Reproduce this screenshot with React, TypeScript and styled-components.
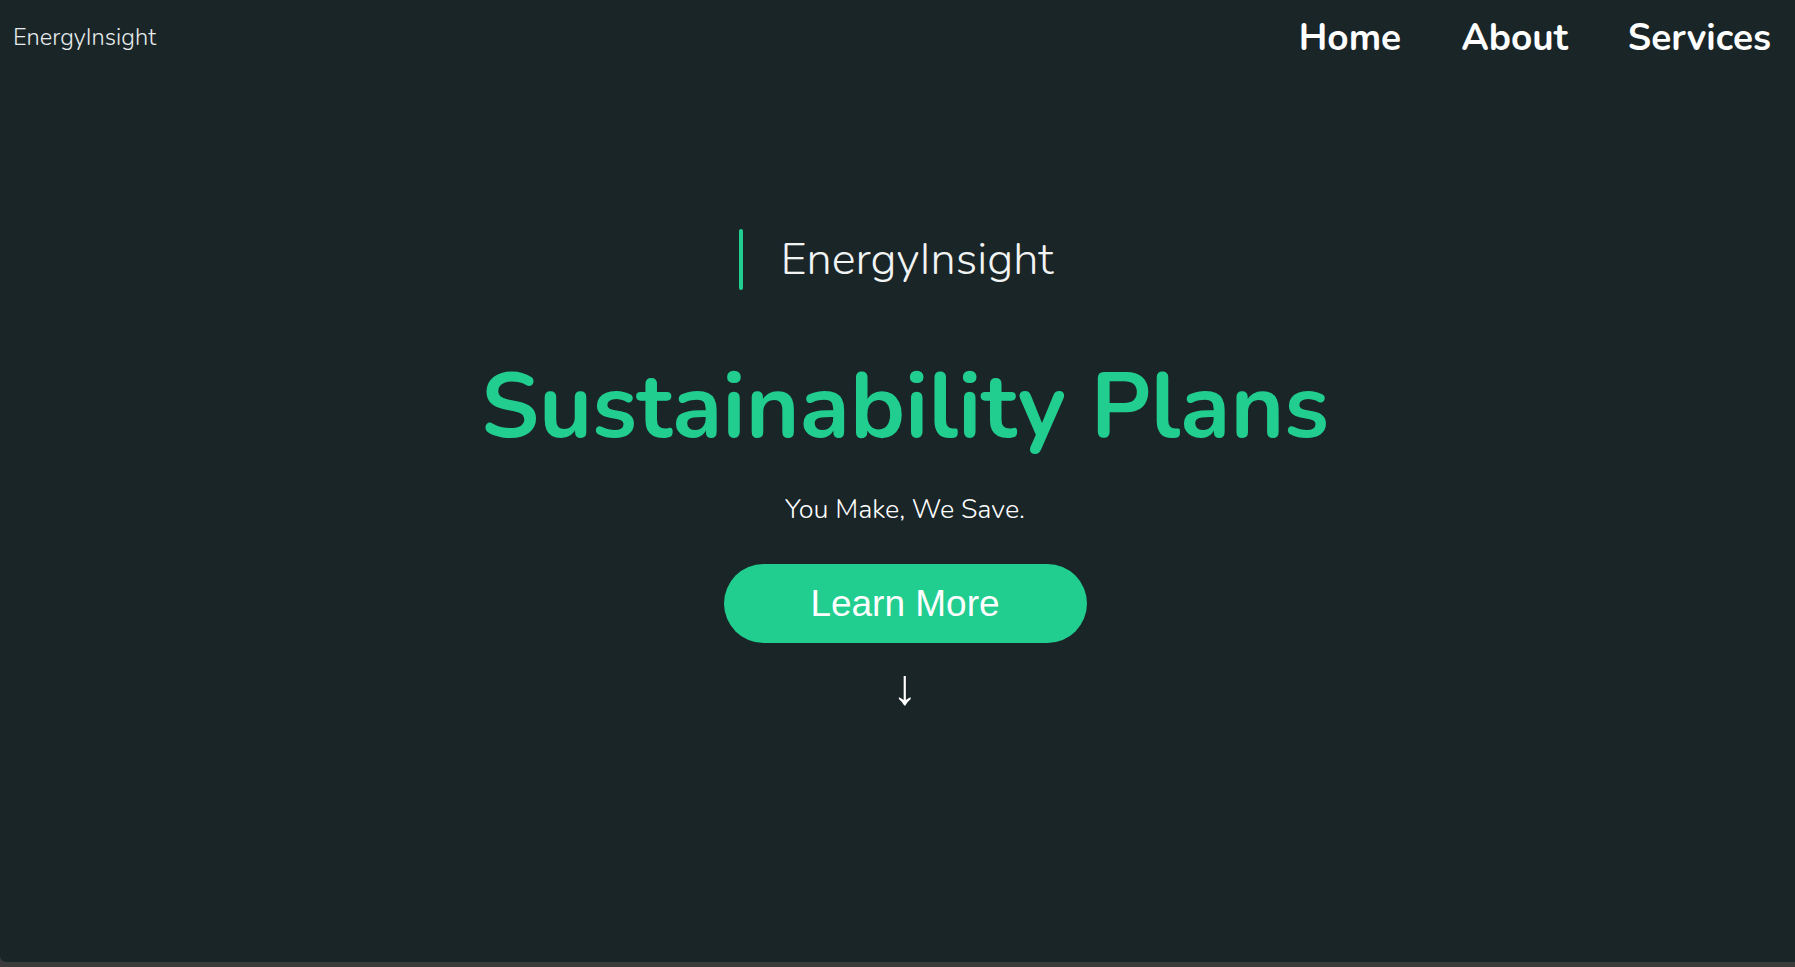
import React from "react";
import styled, { createGlobalStyle } from "styled-components";

const GlobalStyle = createGlobalStyle`
  html, body {
    margin: 0;
    padding: 0;
    background: #3b3b3b;
  }
  * { box-sizing: border-box; }
`;

const Page = styled.div`
  height: 962px;
  background: #1a2528;
  border-bottom-left-radius: 6px;
  display: flex;
  flex-direction: column;
  font-family: "Nunito", "Lato", sans-serif;
  color: #ffffff;
`;

const Header = styled.header`
  display: flex;
  align-items: center;
  justify-content: space-between;
  height: 75px;
  padding: 0 24px 0 13px;
`;

const Logo = styled.a`
  font-size: 23.6px;
  font-weight: 300;
  color: #e8ecec;
  text-decoration: none;
  margin-top: -1px;
`;

const Nav = styled.nav`
  display: flex;
  gap: 60px;
  align-items: center;
`;

const NavLink = styled.a`
  font-size: 37px;
  font-weight: 700;
  color: #ffffff;
  text-decoration: none;
`;

const Hero = styled.main`
  display: flex;
  flex-direction: column;
  align-items: center;
  padding: 154px 0 0 15px;
`;

const Brand = styled.div`
  display: flex;
  align-items: center;
  gap: 38px;
  height: 61px;
  margin-right: 18px;
`;

const BrandBar = styled.span`
  width: 4px;
  height: 61px;
  border-radius: 2px;
  background: #21cd8f;
`;

const BrandText = styled.span`
  font-size: 45px;
  font-weight: 300;
  color: #f2f4f4;
  line-height: 61px;
`;

const Headline = styled.h1`
  margin: 62px 0 0;
  font-size: 92px;
  font-weight: 700;
  line-height: 1.2;
  color: #21cd8f;
`;

const Tagline = styled.p`
  margin: 29px 0 0;
  font-size: 27px;
  font-weight: 300;
  color: #ffffff;
`;

const Button = styled.button`
  margin-top: 36px;
  width: 363px;
  height: 79px;
  border: none;
  border-radius: 40px;
  background: #21cd8f;
  color: #ffffff;
  font-family: "Liberation Sans", Arial, sans-serif;
  font-size: 37px;
  cursor: pointer;
`;

const Arrow = styled.div`
  margin-top: 19px;
  font-family: "Liberation Sans", Arial, sans-serif;
  font-size: 50px;
  line-height: 1;
  color: #ffffff;
`;

export default function App() {
  return (
    <>
      <GlobalStyle />
      <Page>
        <Header>
          <Logo href="#">EnergyInsight</Logo>
          <Nav>
            <NavLink href="#">Home</NavLink>
            <NavLink href="#">About</NavLink>
            <NavLink href="#">Services</NavLink>
          </Nav>
        </Header>
        <Hero>
          <Brand>
            <BrandBar />
            <BrandText>EnergyInsight</BrandText>
          </Brand>
          <Headline>Sustainability Plans</Headline>
          <Tagline>You Make, We Save.</Tagline>
          <Button>Learn More</Button>
          <Arrow>↓</Arrow>
        </Hero>
      </Page>
    </>
  );
}
